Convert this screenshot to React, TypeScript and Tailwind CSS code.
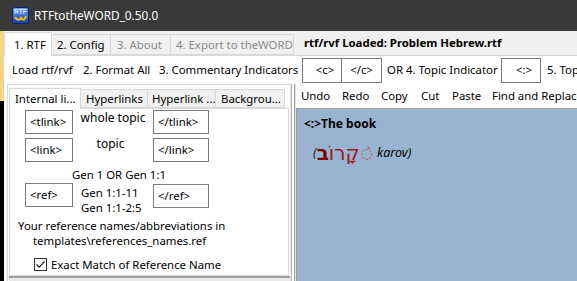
import React from "react";

function AppIcon() {
  return (
    <svg width="17" height="17" viewBox="0 0 17 17">
      <defs>
        <linearGradient id="ig" x1="0" y1="0" x2="0" y2="1">
          <stop offset="0" stopColor="#6aa0ff" />
          <stop offset="1" stopColor="#1d3fa8" />
        </linearGradient>
      </defs>
      <rect x="0.5" y="0.5" width="16" height="16" rx="2" fill="url(#ig)" stroke="#0f2470" />
      <text x="2" y="7" fontSize="6.5" fontWeight="bold" fill="#d8e4ff" fontFamily="Liberation Sans, sans-serif">
        RTF
      </text>
      <path d="M3 10 Q6 15 9 11 Q12 15 14 9" stroke="#f6c000" strokeWidth="2" fill="none" />
    </svg>
  );
}

function TagBox({ label, w }: { label: string; w: string }) {
  return (
    <div className={`${w} shrink-0 h-[24px] border border-[#7a7a7a] bg-white flex items-center pl-[4px]`}>
      {label}
    </div>
  );
}

export default function App() {
  const font = { fontFamily: '"Noto Sans", "Open Sans", sans-serif' };
  return (
    <div
      className="w-[577px] h-[281px] overflow-hidden flex flex-col bg-[#f0f0f0] text-black text-[11.4px] whitespace-nowrap"
      style={font}
    >
      {/* title bar */}
      <div className="h-[31px] shrink-0 bg-[#393939] flex items-center pl-[12px] gap-[4px]">
        <AppIcon />
        <span className="text-white text-[11.8px] ml-[1px]">RTFtotheWORD_0.50.0</span>
      </div>

      <div className="flex-1 flex min-h-0">
        {/* desktop behind window */}
        <div className="w-[4px] shrink-0 flex flex-col">
          <div className="h-[70px] bg-[#f4d689]" />
          <div className="flex-1 bg-black" />
        </div>

        <div className="flex-1 flex flex-col min-w-0">
          {/* main tabs */}
          <div className="h-[24px] shrink-0 flex items-end relative">
            <div className="h-[24px] w-[48px] shrink-0 bg-white border border-b-0 border-[#d9d9d9] flex items-center pl-[9px] relative z-10 -mb-px">
              1. RTF
            </div>
            <div className="h-[21px] w-[59px] shrink-0 border border-l-0 border-[#d9d9d9] flex items-center pl-[5px]">2. Config</div>
            <div className="h-[21px] w-[60px] shrink-0 border border-l-0 border-[#d9d9d9] flex items-center pl-[6px] text-[#8a8a8a]">3. About</div>
            <div className="h-[21px] w-[123px] shrink-0 border border-l-0 border-[#d9d9d9] flex items-center pl-[5px] text-[#8a8a8a]">4. Export to theWORD</div>
            <div className="self-center pl-[10px] font-bold">rtf/rvf Loaded: Problem Hebrew.rtf</div>
          </div>

          {/* tab page */}
          <div className="flex-1 bg-white border-t border-[#d9d9d9] flex flex-col min-h-0">
            <div className="h-[28px] shrink-0 flex items-center">
              <span className="pl-[8px] w-[79px] shrink-0">Load rtf/rvf</span>
              <span className="w-[76px] shrink-0">2. Format All</span>
              <span className="w-[143px] shrink-0">3. Commentary Indicators</span>
              <div className="w-[40px] shrink-0 h-[25px] border border-[#7a7a7a] flex items-center justify-center pl-[6px]">&lt;c&gt;</div>
              <div className="w-[40px] shrink-0 h-[25px] border border-l-0 border-[#7a7a7a] flex items-center justify-center">&lt;/c&gt;</div>
              <span className="pl-[5px] w-[119px] shrink-0">OR 4. Topic Indicator</span>
              <div className="w-[40px] shrink-0 h-[25px] border border-[#7a7a7a] flex items-center justify-center pl-[6px]">&lt;:&gt;</div>
              <span className="pl-[6px]">5. Topic</span>
            </div>

            <div className="flex-1 flex min-h-0">
              {/* left panel */}
              <div className="w-[286px] shrink-0 pl-[3px] flex flex-col">
                <div className="flex-1 border-l border-t border-[#d9d9d9] bg-white pl-[1px] pt-[2px] flex flex-col">
                  <div className="h-[21px] shrink-0 flex items-end">
                    <div className="h-[21px] w-[72px] shrink-0 bg-white border border-b-0 border-[#d9d9d9] flex items-center pl-[5px] relative z-10 -mb-px">
                      Internal li...
                    </div>
                    <div className="h-[19px] w-[67px] shrink-0 bg-[#f0f0f0] border border-l-0 border-[#d9d9d9] flex items-center pl-[5px]">Hyperlinks</div>
                    <div className="h-[19px] w-[68px] shrink-0 bg-[#f0f0f0] border border-l-0 border-[#d9d9d9] flex items-center pl-[4px]">Hyperlink ...</div>
                    <div className="h-[19px] w-[69px] shrink-0 bg-[#f0f0f0] border border-l-0 border-[#d9d9d9] flex items-center pl-[5px]">Backgrou...</div>
                  </div>
                  <div className="flex-1 border border-[#d9d9d9] bg-white flex flex-col pl-[15px] pt-[1px] mr-[1px]">
                    <div className="flex items-start h-[24px]">
                      <TagBox label="<tlink>" w="w-[48px]" />
                      <div className="w-[80px] shrink-0 text-center -mt-[1px] text-[12px]">whole topic</div>
                      <TagBox label="</tlink>" w="w-[56px]" />
                    </div>
                    <div className="flex items-start h-[24px] mt-[4px]">
                      <TagBox label="<link>" w="w-[48px]" />
                      <div className="w-[80px] shrink-0 text-center -mt-[3px] pr-[5px] text-[12px]">topic</div>
                      <TagBox label="</link>" w="w-[56px]" />
                    </div>
                    <div className="w-[184px] text-center mt-[4px] h-[17px] leading-[17px] pl-[4px]">Gen 1 OR Gen 1:1</div>
                    <div className="flex items-start h-[34px]">
                      <TagBox label="<ref>" w="w-[48px]" />
                      <div className="w-[80px] shrink-0 pl-[8px] leading-[15px] pt-[2px]">
                        <div>Gen 1:1-11</div>
                        <div>Gen 1:1-2:5</div>
                      </div>
                      <div className="mt-[1px]">
                        <TagBox label="</ref>" w="w-[56px]" />
                      </div>
                    </div>
                    <div className="-ml-[7px] leading-[15px] mt-[1px]">Your reference names/abbreviations in</div>
                    <div className="ml-[8px] leading-[15px]">templates\references_names.ref</div>
                    <div className="flex items-center ml-[9px] mt-[8px] gap-[4px]">
                      <div className="w-[13px] h-[13px] border border-[#333] flex items-center justify-center">
                        <svg width="11" height="11" viewBox="0 0 11 11">
                          <path d="M1.5 5.5 L4.2 8.2 L9.5 2.5" stroke="#222" strokeWidth="1.2" fill="none" />
                        </svg>
                      </div>
                      <span>Exact Match of Reference Name</span>
                    </div>
                  </div>
                  <div className="h-[5px] shrink-0 border-t-2 border-[#a0a0a0] bg-[#e8e8e8]" />
                </div>
              </div>

              {/* splitter */}
              <div className="w-[6px] shrink-0 flex">
                <div className="w-[1px] bg-[#e3e3e3]" />
                <div className="w-[1px] bg-[#b5b5b5]" />
                <div className="w-[2px] bg-white" />
                <div className="w-[1px] bg-[#a0a0a0]" />
                <div className="w-[1px] bg-[#e3e3e3]" />
              </div>

              {/* right panel */}
              <div className="flex-1 flex flex-col min-w-0">
                <div className="h-[24px] shrink-0 flex items-center pl-[5px]">
                  <span className="w-[41px] shrink-0">Undo</span>
                  <span className="w-[39px] shrink-0">Redo</span>
                  <span className="w-[40px] shrink-0">Copy</span>
                  <span className="w-[31px] shrink-0">Cut</span>
                  <span className="w-[40px] shrink-0">Paste</span>
                  <span>Find and Replace</span>
                </div>
                <div className="flex-1 bg-[#99b4d1] border-t border-l border-[#a0a0a0] pl-[7px] pt-[6px]">
                  <div className="text-[12px] font-bold leading-[18px]">&lt;:&gt;The book</div>
                  <div className="mt-[6px] ml-[9px] text-[12.5px] flex items-center h-[28px]">
                    <span className="italic text-[#3a1010]">(</span>
                    <span className="text-[#a01818] text-[20px]" style={{ fontFamily: '"DejaVu Sans", sans-serif' }}>
                      <span>קָרוֹ</span>
                      <span className="font-bold text-[#7a0000]">ב</span>
                    </span>
                    <span
                      className="text-[#c04848] text-[14px] ml-[1px]"
                      style={{ fontFamily: '"DejaVu Sans", sans-serif' }}
                    >
                      ◌̀
                    </span>
                    <span className="italic ml-[4px]">karov)</span>
                  </div>
                </div>
              </div>
            </div>
          </div>
        </div>
      </div>
    </div>
  );
}
